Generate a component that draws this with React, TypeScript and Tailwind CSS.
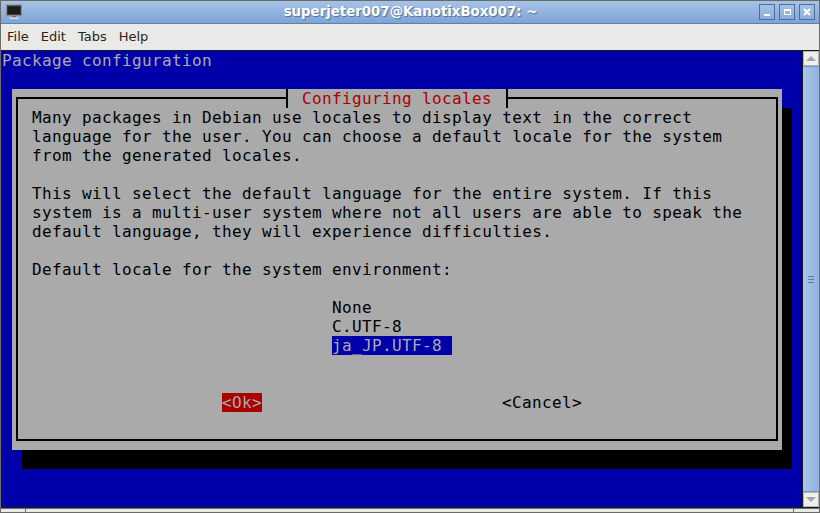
const mono = { fontFamily: '"DejaVu Sans Mono", monospace' }

const paragraphs = [
  'Many packages in Debian use locales to display text in the correct',
  'language for the user. You can choose a default locale for the system',
  'from the generated locales.',
  '',
  'This will select the default language for the entire system. If this',
  'system is a multi-user system where not all users are able to speak the',
  'default language, they will experience difficulties.',
  '',
  'Default locale for the system environment:',
  '',
]

function Row({ children }: { children?: React.ReactNode }) {
  return <div className="h-[19px] leading-[19px] whitespace-pre">{children}</div>
}

function WindowButton({ children }: { children: React.ReactNode }) {
  return (
    <div className="w-4 h-4 border border-[#4a6f9c] bg-gradient-to-b from-[#a5c2e6] to-[#8badd9] flex items-center justify-center">
      {children}
    </div>
  )
}

function Dialog() {
  return (
    <div className="relative ml-[10px] w-[770px] h-[361px] bg-[#aaaaaa] px-1 pt-2 shadow-[10px_19px_0_#000000]">
      <div className="border-2 border-black w-[762px] h-[344px] pl-[14px] pt-[9px] text-black">
        {paragraphs.map((line, i) => <Row key={i}>{line}</Row>)}
        <div className="pl-[300px]">
          <Row>None</Row>
          <Row>C.UTF-8</Row>
          <div className="h-[19px] leading-[19px] w-[120px] bg-[#0000aa] text-[#aaaaaa] whitespace-pre">ja_JP.UTF-8</div>
        </div>
        <Row />
        <Row />
        <div className="flex h-[19px] leading-[19px] pl-[190px]">
          <div className="w-10 bg-[#aa0000] text-[#aaaaaa]">&lt;Ok&gt;</div>
          <div className="ml-[240px]">&lt;Cancel&gt;</div>
        </div>
      </div>
      {/* title sits on top of the frame */}
      <div className="absolute left-[274px] top-0 h-[19px] w-[222px] bg-[#aaaaaa] border-x-2 border-black pl-[14px] leading-[19px] text-[#aa0000] whitespace-pre">
        Configuring locales
      </div>
    </div>
  )
}

function Scrollbar() {
  return (
    <div className="w-[16px] flex flex-col">
      <div className="h-[15px] bg-[#eeeeec] border border-[#b5b5b3] flex items-center justify-center">
        <div className="w-0 h-0 border-x-[5px] border-x-transparent border-b-[5px] border-b-[#a5a5a3]" />
      </div>
      <div className="flex-1 bg-gradient-to-r from-[#a9c6ea] to-[#8fb2df] border-y border-[#6c94c4] flex flex-col items-center justify-center gap-[2px]">
        <div className="w-[6px] h-px bg-[#5a7a9f]" />
        <div className="w-[6px] h-px bg-[#5a7a9f]" />
        <div className="w-[6px] h-px bg-[#5a7a9f]" />
      </div>
      <div className="h-[15px] bg-[#eeeeec] border border-[#b5b5b3] flex items-center justify-center">
        <div className="w-0 h-0 border-x-[5px] border-x-transparent border-t-[5px] border-t-[#a5a5a3]" />
      </div>
    </div>
  )
}

export default function App() {
  return (
    <div className="w-[820px] h-[513px] flex flex-col overflow-hidden bg-[#e8e8e6] border-t border-x border-[#6b6b6b]" style={{ fontFamily: '"DejaVu Sans", sans-serif' }}>
      {/* Title bar */}
      <div className="h-[23px] shrink-0 grid grid-cols-[1fr_auto_1fr] items-center bg-gradient-to-b from-[#a6c3e6] to-[#7ea4d6] border-b border-[#5b82ad] pl-[5px] pr-[4px]">
        <svg width="16" height="16" viewBox="0 0 16 16">
          <rect x="0.5" y="1" width="15" height="10.5" fill="#3a3a3a" stroke="#8a8a8a" />
          <rect x="2" y="2.5" width="12" height="7.5" fill="#1c1c1c" />
          <rect x="6" y="12" width="4" height="1.5" fill="#6e6e6e" />
          <rect x="3.5" y="13.5" width="9" height="1.5" fill="#d8d8d8" />
        </svg>
        <div className="text-white font-bold text-[13.33px] [text-shadow:1px_1px_1px_#4f6f96] whitespace-pre">
          superjeter007@KanotixBox007: ~
        </div>
        <div className="flex justify-end gap-1">
          <WindowButton><div className="w-[6px] h-[2px] bg-white mt-[5px]" /></WindowButton>
          <WindowButton><div className="w-[7px] h-[6px] border border-white border-t-2" /></WindowButton>
          <WindowButton>
            <svg width="8" height="8" viewBox="0 0 8 8">
              <path d="M1 1L7 7M7 1L1 7" stroke="#ffffff" strokeWidth="2" />
            </svg>
          </WindowButton>
        </div>
      </div>
      {/* Menu bar */}
      <div className="h-[26px] shrink-0 flex items-center gap-[12px] pl-[6px] text-[13px] text-[#2e2416] bg-[#e9e9e7]">
        <span>File</span>
        <span>Edit</span>
        <span>Tabs</span>
        <span>Help</span>
      </div>
      {/* Terminal + scrollbar */}
      <div className="h-[458px] shrink-0 flex bg-[#1a1a1a] pl-px pt-px pb-px">
        <div className="w-[800px] bg-[#0000aa] text-[#aaaaaa] text-[16px] tracking-[0.37px]" style={mono}>
          <Row>Package configuration</Row>
          <Row />
          <Dialog />
        </div>
        <div className="w-px" />
        <Scrollbar />
      </div>
      {/* Status grip */}
      <div className="flex-1 flex bg-[#e9e9e7] border-y border-[#6b6b6b]">
        <div className="w-[25px] border-r border-[#6b6b6b]" />
        <div className="flex-1" />
        <div className="w-[26px] border-l border-[#6b6b6b]" />
      </div>
    </div>
  )
}
